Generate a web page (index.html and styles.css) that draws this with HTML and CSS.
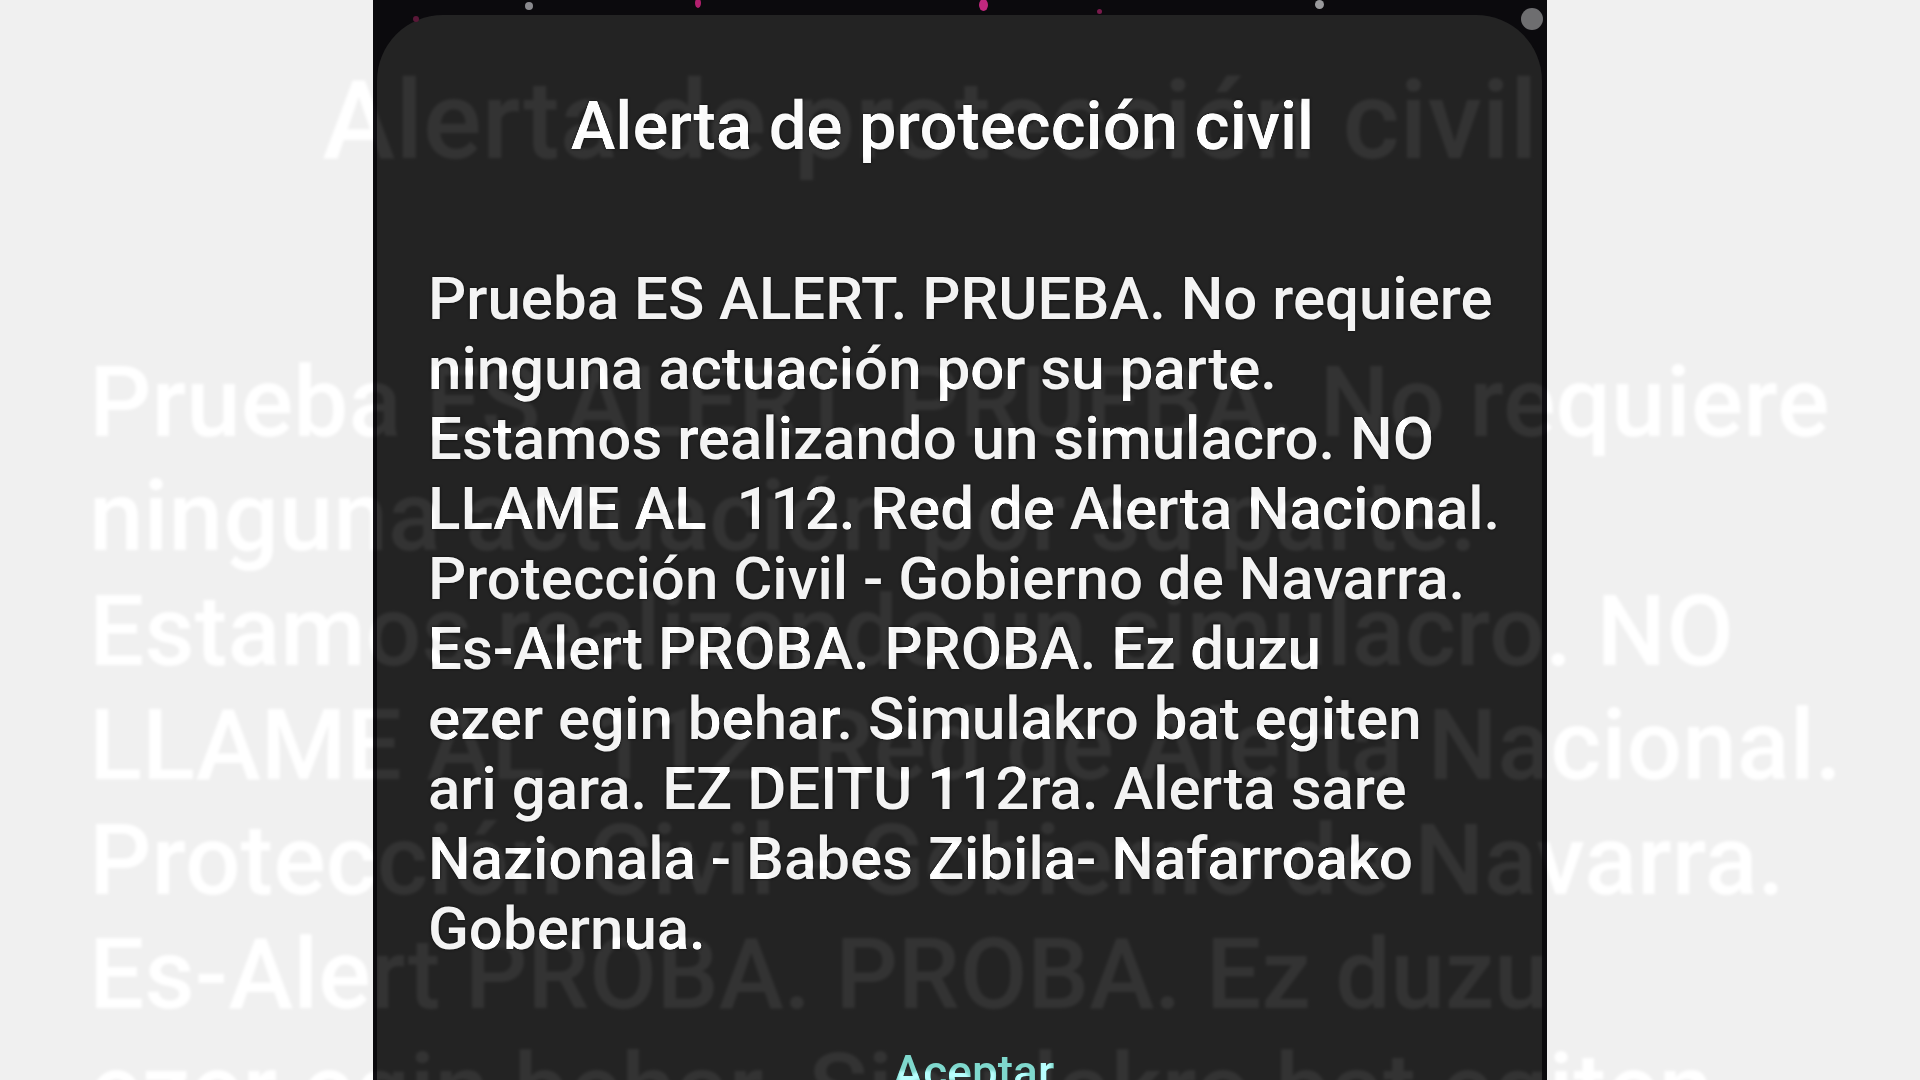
FILE: index.html
```html
<!DOCTYPE html>
<html lang="es">

<head>
    <meta charset="UTF-8">
    <title>Alerta de protección civil</title>
    <link rel="stylesheet" href="styles.css">
</head>

<body>

    <main class="stage">
        <div class="shot">
            <div class="wallpaper">
                <span class="dot dot-1"></span>
                <span class="dot dot-2"></span>
                <span class="dot dot-3"></span>
                <span class="dot dot-4"></span>
                <span class="dot dot-5"></span>
                <span class="dot dot-6"></span>
                <span class="dot dot-7"></span>
            </div>
            <div class="dialog">
                <h1 class="title">Alerta de protección civil</h1>
                <p class="message">
                    <span>Prueba ES ALERT. PRUEBA. No requiere</span>
                    <span>ninguna actuación por su parte.</span>
                    <span>Estamos realizando un simulacro. NO</span>
                    <span>LLAME AL&nbsp; 112. Red de Alerta Nacional.</span>
                    <span>Protección Civil - Gobierno de Navarra.</span>
                    <span>Es-Alert PROBA. PROBA. Ez duzu</span>
                    <span>ezer egin behar. Simulakro bat egiten</span>
                    <span>ari gara. EZ DEITU 112ra. Alerta sare</span>
                    <span>Nazionala - Babes Zibila- Nafarroako</span>
                    <span>Gobernua.</span>
                </p>
                <div class="actions">
                    <span class="accept">Aceptar</span>
                </div>
            </div>
        </div>

        <!-- enlarged copy of the dialog behind/over everything, like the blown-up thumbnail -->
        <div class="ghost" aria-hidden="true">
            <div class="title">Alerta de protección civil</div>
            <div class="message">
                <span>Prueba ES ALERT. PRUEBA. No requiere</span>
                <span>ninguna actuación por su parte.</span>
                <span>Estamos realizando un simulacro. NO</span>
                <span>LLAME AL&nbsp; 112. Red de Alerta Nacional.</span>
                <span>Protección Civil - Gobierno de Navarra.</span>
                <span>Es-Alert PROBA. PROBA. Ez duzu</span>
                <span>ezer egin behar. Simulakro bat egiten</span>
                <span>ari gara. EZ DEITU 112ra. Alerta sare</span>
                <span>Nazionala - Babes Zibila- Nafarroako</span>
                <span>Gobernua.</span>
            </div>
        </div>
    </main>

</body>

</html>
```

FILE: styles.css
```css
body {
    margin: 0;
    background-color: #f0f0f0;
    font-family: Roboto, "Noto Sans", sans-serif;
}

.stage {
    position: relative;
    height: 1080px;
    overflow: hidden;
    display: flex;
    justify-content: center;
    background-color: #f0f0f0;
}

.shot {
    width: 1174px;
    background-color: #0b0a0d;
    display: flex;
    flex-direction: column;
}

.wallpaper {
    position: relative;
    height: 15px;
    flex-shrink: 0;
}

.dot {
    position: absolute;
    z-index: 1;
    border-radius: 50%;
}

.dot-1 { left: 40px; top: 16px; width: 6px; height: 6px; background: #5a1838; }
.dot-2 { left: 152px; top: 2px; width: 8px; height: 8px; background: #8a8a8e; }
.dot-3 { left: 322px; top: -2px; width: 6px; height: 10px; background: #b2206e; }
.dot-4 { left: 606px; top: -1px; width: 9px; height: 12px; background: #c0287e; }
.dot-5 { left: 724px; top: 9px; width: 5px; height: 5px; background: #7a1a4c; }
.dot-6 { left: 942px; top: 0; width: 9px; height: 9px; background: #9a9a9c; }
.dot-7 { left: 1148px; top: 8px; width: 22px; height: 22px; background: #6e6e70; }

.dialog {
    flex: 1;
    box-sizing: border-box;
    margin: 0 5px 0 4px;
    padding: 71px 45px 0 51px;
    background-color: #232323;
    border-radius: 66px 66px 0 0;
}

.title {
    margin: 0;
    padding-right: 40px;
    font-size: 67px;
    font-weight: 500;
    line-height: 80px;
    text-align: center;
    color: #fafafa;
    text-shadow: 0 0 3px rgba(0, 0, 0, 0.8);
}

.message {
    margin: 98px 0 0;
    font-size: 60px;
    font-weight: 500;
    line-height: 70px;
    color: #f3f3f3;
    text-shadow: 0 0 3px rgba(0, 0, 0, 0.8);
}

.message span {
    display: block;
    white-space: nowrap;
}

.actions {
    margin-top: 80px;
    padding-left: 22px;
    text-align: center;
}

.accept {
    font-size: 46px;
    font-weight: 500;
    line-height: 56px;
    color: #7fd8cd;
}

.ghost {
    position: absolute;
    left: 377px;
    top: 15px;
    width: 1165px;
    box-sizing: border-box;
    padding: 71px 45px 0 51px;
    color: #505050;
    transform: scale(1.635);
    transform-origin: 585px 120px;
    mix-blend-mode: color-dodge;
    filter: blur(1px);
    pointer-events: none;
}

.ghost .title,
.ghost .message {
    color: inherit;
    text-shadow: none;
}
```
